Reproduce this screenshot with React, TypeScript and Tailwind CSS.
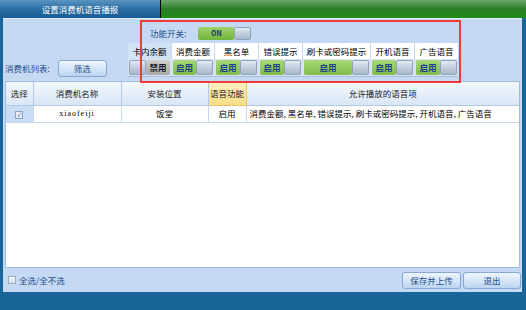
import React from 'react';

const CJK = { fontFamily: '"Noto Sans CJK SC", "Liberation Sans", sans-serif' };

const voiceItems = [
  { name: '卡内余额', w: 'w-[43px]', on: false },
  { name: '消费金额', w: 'w-[42px]', on: true },
  { name: '黑名单', w: 'w-[43px]', on: true },
  { name: '错误提示', w: 'w-[43px]', on: true },
  { name: '刷卡或密码提示', w: 'w-[67px]', on: true },
  { name: '开机语音', w: 'w-[43px]', on: true },
  { name: '广告语音', w: 'w-[43px]', on: true },
];

// 开关的灰色滑块
const Knob = () => (
  <div className="w-[17px] h-full rounded-[2px] border border-[#8ea3bd] bg-gradient-to-b from-[#e3eaf3] via-[#c2cedd] to-[#a9b8cb]" />
);

const VoiceSwitch = ({ on }: { on: boolean }) =>
  on ? (
    <div className="flex h-full w-full">
      <div className="flex-1 flex items-center justify-center rounded-[2px] bg-gradient-to-b from-[#a9d878] to-[#7fbd48] text-[8.5px] font-bold text-[#1c3f8e]">
        启用
      </div>
      <Knob />
    </div>
  ) : (
    <div className="flex h-full w-full">
      <Knob />
      <div className="flex-1 flex items-center justify-center rounded-[2px] bg-gradient-to-b from-[#cfcfcf] to-[#a9a9a9] text-[8.5px] font-bold text-[#1a1a1a]">
        禁用
      </div>
    </div>
  );

const Btn = ({ label, w }: { label: string; w: string }) => (
  <button
    className={`${w} h-[17px] rounded-[3px] border border-[#86a8d2] bg-gradient-to-b from-[#eef5fd] via-[#d6e6f8] to-[#bcd4f0] text-[8.5px] text-[#1e4e8c]`}
  >
    {label}
  </button>
);

export default function App() {
  return (
    <div className="relative w-[526px] h-[310px] bg-[#19659a] overflow-hidden text-[8.5px]" style={CJK}>
      {/* 标题栏 */}
      <div className="flex h-[18px]">
        <div className="w-[160px] flex items-center justify-center bg-gradient-to-b from-[#5b93c0] via-[#2a6fa5] to-[#155b92] text-white">
          设置消费机语音播报
        </div>
        <div className="w-px bg-black" />
        <div className="flex-1 bg-gradient-to-b from-[#6aa76a] via-[#2b7d25] to-[#1f8d1b]" />
      </div>

      {/* 主体 */}
      <div className="flex flex-col h-[274px] ml-[3px] mr-[4px] bg-[#c5d9f2] border-t border-[#e4eefa]">
        {/* 上部：列表标签 + 功能开关 */}
        <div className="flex h-[61px] pl-[2px]">
          <div className="w-[123px] flex items-start pt-[41px] text-[#1e4e8c]">
            <span className="leading-[17px]">消费机列表:</span>
            <div className="ml-[8px]">
              <Btn label="筛选" w="w-[49px]" />
            </div>
          </div>

          <div className="w-[330px] flex flex-col">
            <div className="flex items-center h-[13px] mt-[8px] pl-[22px]">
              <span className="text-[#1e4e8c]">功能开关:</span>
              <div className="flex h-[13px] w-[53px] ml-[12px]">
                <div className="flex-1 flex items-center justify-center rounded-[2px] bg-gradient-to-b from-[#9fd36a] to-[#6fb43a] text-[7px] font-bold text-[#1a2f6a]">
                  ON
                </div>
                <Knob />
              </div>
            </div>

            <div className="flex gap-px h-[16px] mt-[3px] bg-[#cbdcf0]">
              {voiceItems.map((v, i) => (
                <div
                  key={v.name}
                  className={`${v.w} flex items-center justify-center text-black ${i === 0 ? 'bg-[#d3e3f6]' : 'bg-white'}`}
                >
                  {v.name}
                </div>
              ))}
            </div>

            <div className="flex gap-px h-[18px] bg-[#d7e3f2] border-b border-[#a8bfdc]">
              {voiceItems.map((v) => (
                <div key={v.name} className={`${v.w} p-px`}>
                  <VoiceSwitch on={v.on} />
                </div>
              ))}
            </div>
          </div>
        </div>

        {/* 表格 */}
        <div className="flex-1 mx-[2px] mt-[1px] bg-white border border-[#9fbde0]">
          <table className="w-full table-fixed border-collapse text-black">
            <colgroup>
              <col className="w-[27px]" />
              <col className="w-[88px]" />
              <col className="w-[87px]" />
              <col className="w-[38px]" />
              <col />
            </colgroup>
            <thead>
              <tr className="h-[23px] bg-gradient-to-b from-[#f4f8fd] to-[#d9e6f5] text-[#222]">
                <th className="font-normal border-r border-b border-[#b2c9e4]">选择</th>
                <th className="font-normal border-r border-b border-[#b2c9e4]">消费机名称</th>
                <th className="font-normal border-r border-b border-[#b2c9e4]">安装位置</th>
                <th className="font-normal border-r border-b border-[#e5c46a] bg-gradient-to-b from-[#fdf0bf] to-[#f9dc85]">语音功能</th>
                <th className="font-normal border-b border-[#b2c9e4]">允许播放的语音项</th>
              </tr>
            </thead>
            <tbody>
              <tr className="h-[17px]">
                <td className="bg-[#c9def6] border-r border-b border-[#c7d8ec] text-center">
                  <span className="inline-flex w-[8px] h-[8px] items-center justify-center border border-[#8aa2be] bg-[#e9eff6] text-[6px] leading-none text-[#2a5a9a]">
                    ✓
                  </span>
                </td>
                <td
                  className="border-r border-b border-[#c7d8ec] text-center text-[8px] tracking-[1px]"
                  style={{ fontFamily: '"Liberation Serif", serif' }}
                >
                  xiaofeiji
                </td>
                <td className="border-r border-b border-[#c7d8ec] text-center">饭堂</td>
                <td className="border-r border-b border-[#c7d8ec] text-center">启用</td>
                <td className="border-b border-[#c7d8ec] pl-[3px] whitespace-nowrap">
                  消费金额, 黑名单, 错误提示, 刷卡或密码提示, 开机语音, 广告语音
                </td>
              </tr>
            </tbody>
          </table>
        </div>

        {/* 底部操作 */}
        <div className="flex items-center h-[24px] pl-[5px] pr-[1px]">
          <span className="w-[8px] h-[8px] border border-[#9aaec6] bg-gradient-to-b from-[#f3f6fa] to-[#d6dfea]" />
          <span className="ml-[3px] text-[#1e4e8c]">全选/全不选</span>
          <div className="ml-auto flex gap-[2px]">
            <Btn label="保存并上传" w="w-[59px]" />
            <Btn label="退出" w="w-[58px]" />
          </div>
        </div>
      </div>

      {/* 红色标注框 */}
      <div className="absolute left-[140px] top-[20px] w-[321px] h-[63px] border-2 border-[#ef3b3b] pointer-events-none" />
    </div>
  );
}
